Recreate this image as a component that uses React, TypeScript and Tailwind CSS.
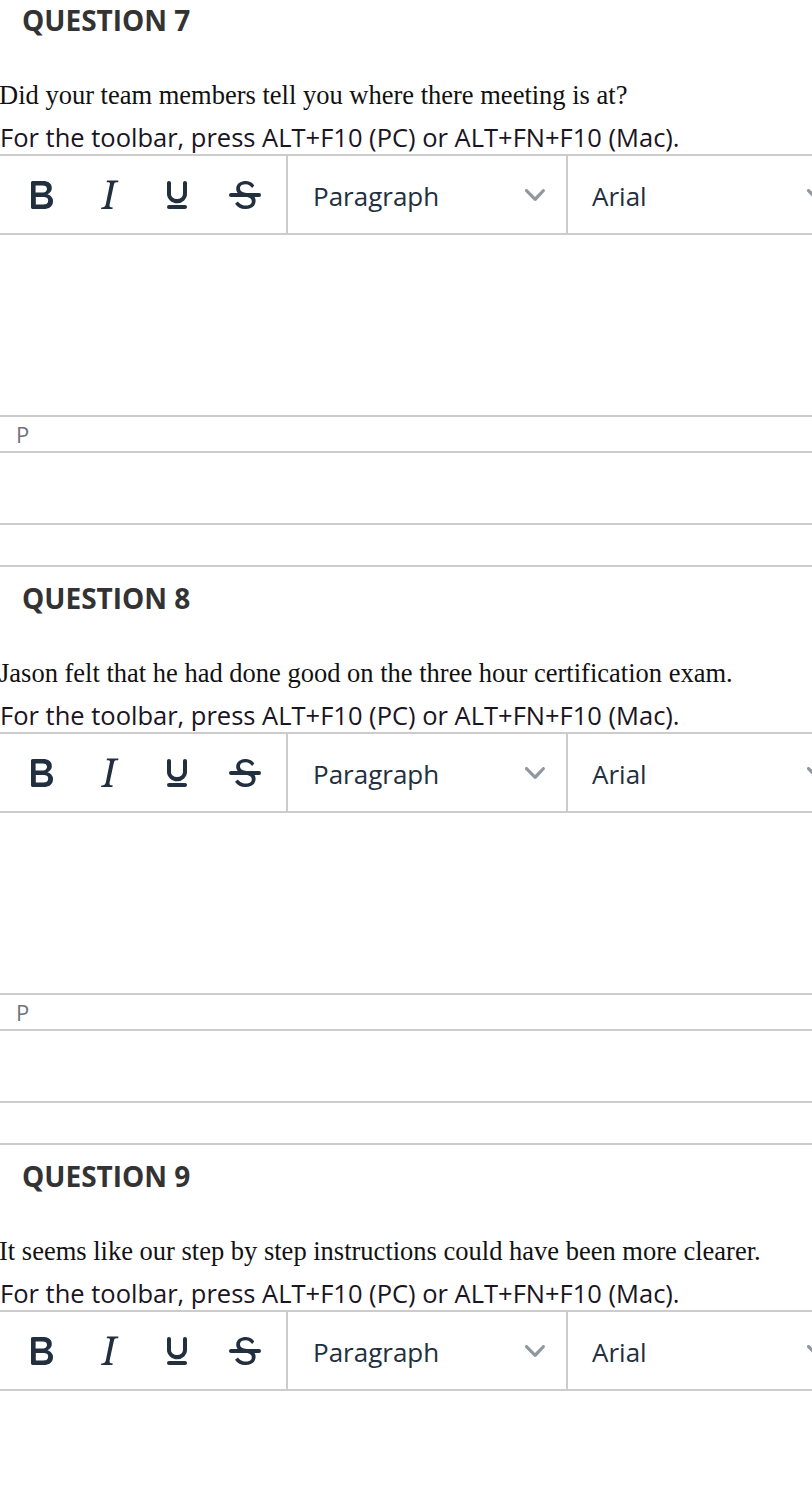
import React from 'react';

const QUESTIONS = [
  { n: 7, text: 'Did your team members tell you where there meeting is at?' },
  { n: 8, text: 'Jason felt that he had done good on the three hour certification exam.' },
  { n: 9, text: 'It seems like our step by step instructions could have been more clearer.' },
];

const sans = "font-['Open_Sans',_'Noto_Sans',_sans-serif]";

function BoldIcon() {
  return (
    <svg width="48" height="48" viewBox="0 0 24 24" fill="#222f3e">
      <path d="M7.8 19c-.3 0-.5 0-.6-.2l-.2-.5V5.7c0-.2 0-.4.2-.5l.6-.2h5c1.5 0 2.7.3 3.5 1 .7.6 1.1 1.4 1.1 2.5a3 3 0 0 1-.6 1.9c-.4.6-1 1-1.6 1.2.4.1.9.3 1.3.6s.8.7 1 1.2c.4.4.5 1 .5 1.6 0 1.3-.4 2.3-1.3 3-.8.7-2.1 1-3.8 1H7.8zm5-8.3c.6 0 1.2-.1 1.6-.5.4-.3.6-.7.6-1.3 0-1.1-.8-1.7-2.3-1.7H9.3v3.5h3.4zm.5 6c.7 0 1.3-.1 1.700-.4.4-.4.6-.9.6-1.5s-.2-1-.7-1.4c-.4-.3-1-.4-2-.4H9.4v3.8h4z" />
    </svg>
  );
}

function ItalicIcon() {
  return (
    <svg width="48" height="48" viewBox="0 0 24 24" fill="#222f3e">
      <path d="M16.7 4.7l-.1.9h-.3c-.6 0-1 0-1.4.3-.3.3-.4.6-.5 1.1l-2.1 9.8v.6c0 .5.4.8 1.4.8h.2l-.2.8H8l.2-.8h.2c1.1 0 1.8-.5 2-1.5l2-9.8.1-.5c0-.6-.4-.8-1.4-.8h-.3l.2-.9h5.8z" />
    </svg>
  );
}

function UnderlineIcon() {
  return (
    <svg width="48" height="48" viewBox="0 0 24 24" fill="#222f3e">
      <path d="M16 5c.6 0 1 .4 1 1v5.5a4 4 0 0 1-.4 1.8l-1 1.4a5.3 5.3 0 0 1-5.5 1 5 5 0 0 1-1.6-1c-.5-.4-.8-.9-1.1-1.4a4 4 0 0 1-.4-1.8V6c0-.6.4-1 1-1s1 .4 1 1v5.5c0 .3 0 .6.2 1l.6.7a3.3 3.3 0 0 0 2.2.8 3.4 3.4 0 0 0 2.2-.8c.3-.2.4-.5.6-.8l.2-.9V6c0-.6.4-1 1-1zM8 17h8c.6 0 1 .4 1 1s-.4 1-1 1H8a1 1 0 0 1 0-2z" />
    </svg>
  );
}

function StrikeIcon() {
  return (
    <svg width="48" height="48" viewBox="0 0 24 24" fill="#222f3e">
      <path d="M15.6 8.5c-.5-.7-1-1.1-1.3-1.3-.6-.4-1.3-.6-2-.6-2.7 0-2.8 1.7-2.8 2.1 0 1.6 1.8 2 3.2 2.3 4.4.9 4.6 2.8 4.6 3.9 0 1.4-.7 4.1-5 4.1A6.2 6.2 0 0 1 7 16.4l1.5-1.1c.4.6 1.6 2 3.7 2 1.6 0 2.5-.4 3-1.2.4-.8.3-2-.8-2.6-.7-.4-1.6-.7-2.9-1-1-.2-3.9-.8-3.9-3.6C7.6 6 10.3 5 12.4 5c2.9 0 4 2 4.2 2.2l-1 1.3z" />
      <path d="M5 11h14a1 1 0 0 1 0 2H5a1 1 0 0 1 0-2z" />
    </svg>
  );
}

function Chevron() {
  return (
    <svg width="20" height="20" viewBox="0 0 10 10" fill="#222f3e" fillOpacity="0.5">
      <path d="M8.7 2.2c.3-.3.8-.3 1 0 .4.4.4.9 0 1.2L5.7 7.8c-.3.3-.9.3-1.2 0L.2 3.4a.8.8 0 0 1 0-1.2c.3-.3.8-.3 1.1 0L5 6l3.7-3.8z" />
    </svg>
  );
}

function Editor() {
  const buttons = [BoldIcon, ItalicIcon, UnderlineIcon, StrikeIcon];
  return (
    <div>
      {/* Toolbar */}
      <div className="h-[81px] border-y-2 border-[#cccccc] flex overflow-hidden">
        <div className="w-[288px] shrink-0 pl-[7px] flex items-center border-r-2 border-[#cccccc]">
          {buttons.map((Icon, i) => (
            <div key={i} className="w-[68px] h-[68px] flex items-center justify-center">
              <Icon />
            </div>
          ))}
        </div>
        <div className="w-[280px] shrink-0 pl-[25px] pr-[21px] flex items-center justify-between border-r-2 border-[#cccccc]">
          <span className={`${sans} text-[26px] text-[#222f3e] pt-[4px]`}>Paragraph</span>
          <Chevron />
        </div>
        <div className="w-[280px] shrink-0 pl-[24px] pr-[21px] flex items-center justify-between">
          <span className={`${sans} text-[26px] text-[#222f3e] pt-[4px]`}>Arial</span>
          <Chevron />
        </div>
      </div>
      {/* Body */}
      <div className="h-[180px]" />
      {/* Status bar */}
      <div className="h-[38px] border-y-2 border-[#cccccc] flex items-center pl-[16px]">
        <span className={`${sans} text-[22px] text-[#6f747a] leading-none`}>P</span>
      </div>
      <div className="h-[72px] border-b-2 border-[#cccccc]" />
      <div className="h-[40px]" />
    </div>
  );
}

export default function App() {
  return (
    <div className="bg-white w-[812px] h-[1490px] overflow-hidden">
      <div className="-mt-[13px]">
        {QUESTIONS.map(q => (
          <section key={q.n} className="border-t-2 border-[#cccccc]">
            <div className="h-[60px] flex items-center pl-[22px] pt-[2px]">
              <h2 className={`${sans} text-[28px] font-bold text-[#333333]`}>QUESTION {q.n}</h2>
            </div>
            <div className="pt-[27px] h-[67px] flex items-center">
              <p className="font-['Liberation_Serif',_'Times_New_Roman',_serif] text-[26.5px] text-[#111111] whitespace-nowrap -ml-px">
                {q.text}
              </p>
            </div>
            <div className="h-[38px] pt-[4px] flex items-center">
              <p className={`${sans} text-[25.5px] text-[#1a1423] whitespace-nowrap`}>
                For the toolbar, press ALT+F10 (PC) or ALT+FN+F10 (Mac).
              </p>
            </div>
            <Editor />
          </section>
        ))}
      </div>
    </div>
  );
}
